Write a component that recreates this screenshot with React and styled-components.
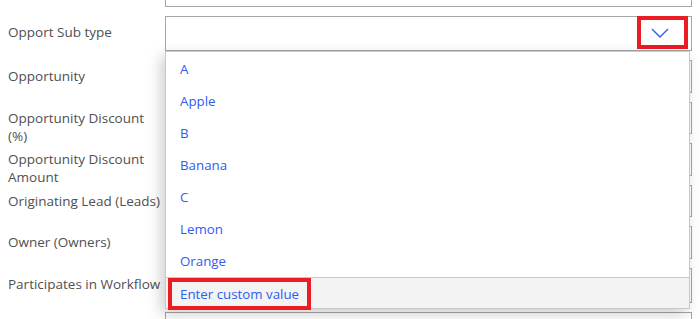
import React from "react";
import styled, { createGlobalStyle } from "styled-components";

const Global = createGlobalStyle`
  html, body { margin: 0; padding: 0; background: #ffffff; }
  body { font-family: "Open Sans", "Noto Sans", sans-serif; overflow: hidden; }
  * { box-sizing: border-box; }
`;

const Form = styled.div`
  width: 700px;
  height: 319px;
  display: flex;
  flex-direction: column;
  gap: 9px;
  overflow: hidden;
`;

const Row = styled.div`
  display: grid;
  grid-template-columns: 165px 527px;
  align-items: start;
  height: ${(p) => p.$h}px;
  flex: none;
`;

const Label = styled.div`
  padding: 7px 10px 0 8px;
  font-size: 13.5px;
  line-height: 18px;
  color: #505050;
  white-space: ${(p) => (p.$wrap ? "normal" : "nowrap")};
`;

const Field = styled.div`
  position: relative;
  height: ${(p) => p.$h}px;
  border: 1px solid #a6a6a6;
  background: #fff;
`;

const Stub = styled.div`
  margin-left: 165px;
  width: 527px;
  height: 7px;
  border: 1px solid #a6a6a6;
  border-top: none;
  flex: none;
`;

const Chevron = styled.div`
  position: absolute;
  right: 3px;
  top: -1px;
  width: 51px;
  height: 33px;
  border: 4px solid #ec1c24;
  display: flex;
  align-items: center;
  justify-content: center;
  padding-right: 6px;
`;

const Menu = styled.div`
  position: absolute;
  left: -1px;
  right: 1px;
  top: 34px;
  height: 258px;
  background: #fff;
  border: 1px solid #c8c8c8;
  box-shadow: -4px 5px 14px rgba(0, 0, 0, 0.2);
  display: flex;
  flex-direction: column;
  z-index: 5;
`;

const List = styled.div`
  padding-top: 1px;
  flex: 1;
`;

const Item = styled.div`
  height: 32px;
  display: flex;
  align-items: center;
  padding-left: 14px;
  font-size: 13.3px;
  color: #2f5cf2;
`;

const Footer = styled.div`
  height: 31px;
  border-top: 1px solid #c8c8c8;
  background: #f3f3f3;
  padding-left: 2px;
  display: flex;
  align-items: flex-start;
`;

const CustomButton = styled.div`
  height: 32px;
  border: 4px solid #ec1c24;
  padding: 0 8px;
  display: flex;
  align-items: center;
  font-size: 13.3px;
  color: #2f5cf2;
  background: #f3f3f3;
  position: relative;
  z-index: 6;
`;

const rows = [
  { label: "Opportunity", h: 33 },
  { label: "Opportunity Discount (%)", h: 32, wrap: true },
  { label: "Opportunity Discount Amount", h: 33, wrap: true },
  { label: "Originating Lead (Leads)", h: 32 },
  { label: "Owner (Owners)", h: 33 },
  { label: "Participates in Workflow", h: 35 },
  { label: "", h: 32 },
];

const options = ["A", "Apple", "B", "Banana", "C", "Lemon", "Orange"];

export default function App() {
  return (
    <>
      <Global />
      <Form>
        <Stub />
        <Row $h={35}>
          <Label>Opport Sub type</Label>
          <Field $h={35}>
            <Chevron>
              <svg width="18" height="10" viewBox="0 0 18 10">
                <path d="M1 1 L9 9 L17 1" fill="none" stroke="#2f5cf2" strokeWidth="1.4" />
              </svg>
            </Chevron>
            <Menu>
              <List>
                {options.map((o) => (
                  <Item key={o}>{o}</Item>
                ))}
              </List>
              <Footer>
                <CustomButton>Enter custom value</CustomButton>
              </Footer>
            </Menu>
          </Field>
        </Row>
        {rows.map((r, i) => (
          <Row key={i} $h={r.h}>
            <Label $wrap={r.wrap}>{r.label}</Label>
            <Field $h={r.h} />
          </Row>
        ))}
      </Form>
    </>
  );
}
